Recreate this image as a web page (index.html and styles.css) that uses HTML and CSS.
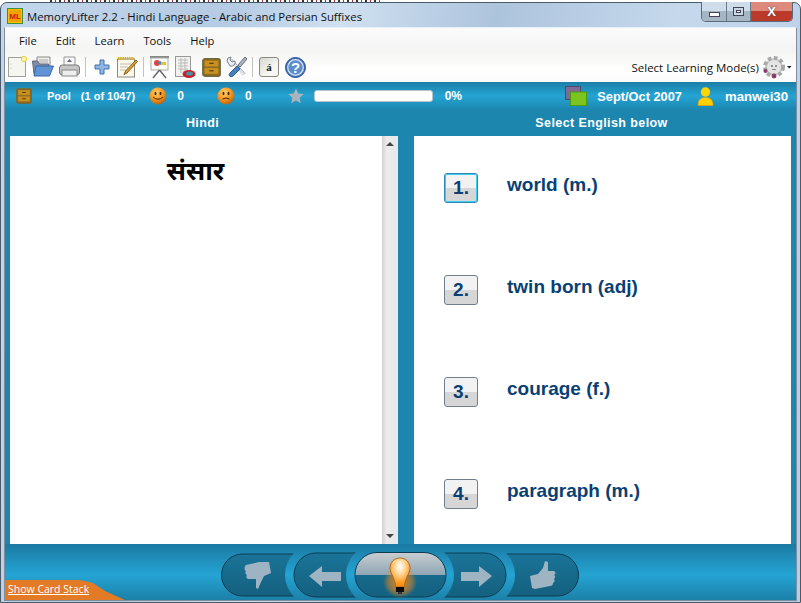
FILE: index.html
```html
<!DOCTYPE html>
<html lang="en">
<head>
<meta charset="utf-8">
<title>MemoryLifter</title>
<link rel="stylesheet" href="styles.css">
</head>
<body>
<svg class="defs" width="0" height="0" aria-hidden="true">
  <defs>
    <symbol id="drawer" viewBox="0 0 18 18">
      <rect x=".7" y=".7" width="16.6" height="16.6" rx="2" fill="#8d6a1e" stroke="#6c6a40" stroke-width="1.2"/>
      <rect x="2.500" y="2.500" width="13" height="5.500" fill="#c8901f"/>
      <rect x="2.500" y="9.500" width="13" height="5.500" fill="#c8901f"/>
      <rect x="7" y="4.500" width="4" height="1.200" fill="#5b3f0d"/>
      <rect x="7" y="11.500" width="4" height="1.200" fill="#5b3f0d"/>
    </symbol>
    <radialGradient id="face" cx=".4" cy=".3" r=".8">
      <stop offset="0" stop-color="#ffd070"/><stop offset=".55" stop-color="#f0921c"/><stop offset="1" stop-color="#a8520c"/>
    </radialGradient>
    <radialGradient id="bulb" cx=".5" cy=".3" r=".7">
      <stop offset="0" stop-color="#fff"/><stop offset=".35" stop-color="#ffd9a0"/><stop offset=".8" stop-color="#ff9a20"/><stop offset="1" stop-color="#f08a10"/>
    </radialGradient>
    <linearGradient id="ringfill" gradientUnits="userSpaceOnUse" x1="0" y1="-8" x2="0" y2="48">
      <stop offset="0" stop-color="#1b7aa2"/><stop offset=".55" stop-color="#25a4d4"/><stop offset="1" stop-color="#1c80a8"/>
    </linearGradient>
    <linearGradient id="pillfill" x1="0" y1="0" x2="0" y2="1">
      <stop offset="0" stop-color="#1a7498"/><stop offset="1" stop-color="#14607f"/>
    </linearGradient>
    <linearGradient id="hintfill" x1="0" y1="0" x2="0" y2="1">
      <stop offset="0" stop-color="#c9ced2"/><stop offset=".5" stop-color="#8ea6b4"/><stop offset=".5" stop-color="#176a8c"/><stop offset="1" stop-color="#14607f"/>
    </linearGradient>
    <radialGradient id="glow">
      <stop offset="0" stop-color="#ff8a10" stop-opacity=".9"/><stop offset=".7" stop-color="#ff8a10" stop-opacity=".45"/><stop offset="1" stop-color="#ff8a10" stop-opacity="0"/>
    </radialGradient>
  </defs>
</svg>
<div class="behind"></div>
<div class="window">
  <header class="titlebar">
    <svg class="app-icon" width="16" height="16" viewBox="0 0 16 16"><rect x=".5" y=".5" width="15" height="15" fill="#f8c400" stroke="#3f8f3a"/><rect x="2" y="2" width="12" height="12" fill="#f4a100"/><text x="8" y="11" text-anchor="middle" class="app-icon-text">ML</text></svg>
    <span class="title">MemoryLifter 2.2 - Hindi Language - Arabic and Persian Suffixes</span>
    <div class="caption">
      <span class="cap cap-min"><i class="min-glyph"></i></span>
      <span class="cap cap-max"><i class="max-glyph"></i></span>
      <span class="cap cap-close">X</span>
    </div>
  </header>
  <div class="client">
    <nav class="menubar">
      <span>File</span><span>Edit</span><span>Learn</span><span>Tools</span><span>Help</span>
    </nav>
    <div class="toolbar">
      <svg class="tool" width="19" height="22" viewBox="0 0 19 22"><rect x=".5" y="1.500" width="17" height="19" fill="#f6f6f0" stroke="#a0a09a"/><circle cx="3" cy="8" r=".6" fill="#bbb"/><circle cx="3" cy="12" r=".6" fill="#bbb"/><circle cx="16" cy="3" r="2.600" fill="#fff6b0" stroke="#e8d040"/></svg>
      <svg class="tool" width="22" height="22" viewBox="0 0 22 22"><path d="M5 1h13v9H5z" fill="#ecece8" stroke="#8a8a8a"/><path d="M7 4h9M7 6h9" stroke="#aaa"/><path d="M0.500 5h5l2 3h9v10H2z" fill="#7d8ea8" stroke="#667"/><path d="M4 10h17.500l-4 10H2z" fill="#5f93d6" stroke="#3a6aa4"/></svg>
      <svg class="tool" width="21" height="22" viewBox="0 0 21 22"><path d="M5 1h11v9H5z" fill="#f6f6f6" stroke="#999"/><path d="M8 6l2.500-3L13 6z" fill="#667"/><rect x=".5" y="9" width="20" height="10" rx="3" fill="#c6c6c6" stroke="#777"/><rect x="3" y="14" width="15" height="6" fill="#eee" stroke="#888"/></svg>
      <i class="sep"></i>
      <svg class="tool ml3" width="16" height="16" viewBox="0 0 16 16"><path d="M6 1h4v5h5v4h-5v5H6v-5H1V6h5z" fill="#8fb6e2" stroke="#3f72ad"/></svg>
      <svg class="tool ml2" width="21" height="22" viewBox="0 0 21 22"><rect x=".5" y="3" width="17" height="18" fill="#fbf8ea" stroke="#8a8a7a"/><path d="M1 2.500h16" stroke="#d8b020" stroke-width="3" stroke-dasharray="1.500 .7"/><path d="M3 8h11M3 11h8M3 14h6" stroke="#bbb"/><path d="M19 4l1.500 1.500L10 17l-3 1.500L8.500 15z" fill="#e0a030" stroke="#6a4a10" stroke-width=".8"/></svg>
      <i class="sep"></i>
      <svg class="tool" width="21" height="24" viewBox="0 0 21 24"><rect x="1" y="1" width="19" height="2" fill="#888"/><rect x="2" y="3" width="17" height="12" fill="#fdfdf8" stroke="#aaa"/><circle cx="8" cy="8" r="3" fill="#d44"/><path d="M8 8l4-2v4z" fill="#48b"/><path d="M12 7h5v3h-5z" fill="#e8c040"/><path d="M10.500 15L4 23M10.500 15L17 23" stroke="#666" stroke-width="1.400"/></svg>
      <svg class="tool" width="21" height="23" viewBox="0 0 21 23"><rect x=".5" y=".5" width="15" height="20" fill="#f2f2ee" stroke="#999"/><path d="M3 4h10M3 7h10M3 10h10M3 13h10M6 2v15M10 2v15" stroke="#bbb"/><ellipse cx="14" cy="18" rx="6.500" ry="4" fill="#c8202a"/><ellipse cx="14.500" cy="17.500" rx="3.500" ry="2" fill="#4a90a8"/></svg>
      <svg class="tool ml1" width="19" height="19"><use href="#drawer"/></svg>
      <svg class="tool" width="21" height="22" viewBox="0 0 21 22"><path d="M4 4l14 15" stroke="#dfe3e8" stroke-width="3"/><path d="M4 4l14 15" stroke="#8a929c" stroke-width=".8" transform="translate(1.500 -1)"/><path d="M1 5a4 4 0 0 1 4-4l-1 3 2 2 3-1a4 4 0 0 1-5 5z" fill="#eef0f2" stroke="#7a8088"/><path d="M19 1l2 2-7 8-2-2z" fill="#aab8c8" stroke="#667"/><path d="M11 10l3 3-7 7c-3 2-5-1-3-3z" fill="#4a80c0" stroke="#2a5a94"/></svg>
      <i class="sep"></i>
      <span class="key ml1"><span class="key-glyph">á</span></span>
      <svg class="tool ml1" width="21" height="21" viewBox="0 0 21 21"><circle cx="10.500" cy="10.500" r="10" fill="#3f6fb8" stroke="#2c4f8c"/><circle cx="10.500" cy="10.500" r="7.800" fill="#5d8ccd" stroke="#d4e3f6" stroke-width="1.300"/><text x="10.500" y="15.500" text-anchor="middle" class="help-text">?</text></svg>
      <div class="mode">
        <span>Select Learning Mode(s)</span>
        <svg width="30" height="24" viewBox="0 0 30 24"><circle cx="12" cy="12" r="9" fill="#c9c9c9" stroke="#a8a8a8" stroke-width="4" stroke-dasharray="3.500 2.500"/><circle cx="12" cy="12" r="7" fill="#e4e4e4"/><circle cx="10" cy="11" r="1" fill="#777"/><circle cx="14" cy="11" r="1" fill="#777"/><path d="M10 14.500h4" stroke="#888"/><circle cx="12" cy="21" r="2.400" fill="#8b3a6b"/><circle cx="3.500" cy="16" r="2" fill="#8b3a6b"/><path d="M25 11h4.500l-2.250 2.500z" fill="#222"/></svg>
      </div>
    </div>
    <main class="learn">
      <div class="status">
        <svg class="status-drawer" width="16" height="16"><use href="#drawer"/></svg>
        <span class="pool">Pool</span>
        <span class="count">(1 of 1047)</span>
        <svg class="smile" width="18" height="18" viewBox="0 0 18 18"><circle cx="9" cy="9" r="8.500" fill="url(#face)"/><ellipse cx="6.500" cy="6.500" rx="1" ry="1.800" fill="#4a2600"/><ellipse cx="11.500" cy="6.500" rx="1" ry="1.800" fill="#4a2600"/><path d="M4 10q5 4.500 10 0" fill="none" stroke="#4a2600"/></svg>
        <b class="num">0</b>
        <svg class="smile s2" width="18" height="18" viewBox="0 0 18 18"><circle cx="9" cy="9" r="8.500" fill="url(#face)"/><ellipse cx="6.500" cy="6.500" rx="1" ry="1.800" fill="#4a2600"/><ellipse cx="11.500" cy="6.500" rx="1" ry="1.800" fill="#4a2600"/><path d="M5.500 12q3.500-2 7 0" fill="none" stroke="#4a2600"/></svg>
        <b class="num">0</b>
        <svg class="star" width="16" height="16" viewBox="0 0 16 16"><path d="M8 .5l2.300 5 5.400.6-4 3.700 1.100 5.400L8 12.500l-4.800 2.700 1.100-5.400-4-3.700 5.400-.6z" fill="#a9b4bd"/></svg>
        <div class="progress"></div>
        <span class="percent">0%</span>
        <svg class="flags" width="22" height="20" viewBox="0 0 22 20"><rect x=".5" y=".5" width="15" height="13" fill="#7d6a96" stroke="#4f4a68"/><rect x="5.500" y="6" width="16" height="13.500" fill="#7cc520" stroke="#4f9a12"/></svg>
        <span class="set">Sept/Oct 2007</span>
        <svg class="user" width="17" height="19" viewBox="0 0 17 19"><circle cx="8.500" cy="5" r="4.700" fill="#ffd400"/><path d="M1 18.500c0-6 3-8 7.500-8s7.500 2 7.500 8z" fill="#ffd000" stroke="#e8a000" stroke-width=".6"/></svg>
        <span class="username">manwei30</span>
      </div>
      <div class="headers">
        <h2>Hindi</h2>
        <h2 class="header-right">Select English below</h2>
      </div>
      <div class="panels">
        <section class="question">
          <div class="question-text">संसार</div>
          <div class="scrollbar"><i class="arrow"></i><i class="arrow down"></i></div>
        </section>
        <section class="answers">
          <div class="answer"><span class="answer-key focused">1.</span><span>world (m.)</span></div>
          <div class="answer"><span class="answer-key">2.</span><span>twin born (adj)</span></div>
          <div class="answer"><span class="answer-key">3.</span><span>courage (f.)</span></div>
          <div class="answer"><span class="answer-key">4.</span><span>paragraph (m.)</span></div>
        </section>
      </div>
      <footer class="controls">
        <a class="stack-link" href="#">Show Card Stack</a>
        <svg class="pill-group" width="358" height="48" viewBox="0 0 358 48">
          <rect class="dark" x=".5" y="2" width="357" height="42" rx="21"/>
          <rect x="64" y="-8" width="230" height="62" rx="31" fill="url(#ringfill)"/>
          <rect class="dark" x="73" y="1" width="212" height="44" rx="22"/>
          <rect x="125" y="-8" width="108" height="62" rx="31" fill="url(#ringfill)"/>
          <rect class="hint" x="134" y=".5" width="91" height="44.500" rx="22"/>
          <path class="glyph" d="M25 13l13-3 10 0 2 11-7 3-3 6-3 7-2-1 0-9-8 0c-2-1-2-3-1-4-2-1-2-3-1-4-2-1-2-4 0-6z"/>
          <path class="glyph" d="M88 24l13-10v6h19v9h-19v6z"/>
          <ellipse cx="179" cy="30" rx="17" ry="16" fill="url(#glow)"/>
          <path d="M179 6c6 0 10 4.500 10 10 0 6-5 9-5.500 19h-9c-.5-10-5.500-13-5.500-19 0-5.500 4-10 10-10z" fill="url(#bulb)" stroke="#a86a1c"/>
          <rect x="175" y="35" width="8" height="5" fill="#0c0c0c"/>
          <rect x="177" y="40" width="4" height="2" fill="#333"/>
          <path class="glyph" d="M271 24l-13-10v6h-18v9h18v6z"/>
          <path class="glyph" d="M309 24l8-2 5-6 2-7 3 1 0 9 6 0c2 1 2 3 0 4 2 1 1 3 0 4 1 1 1 3-1 4 0 2-1 3-3 3l-15 3-3-1z"/>
        </svg>
      </footer>
    </main>
  </div>
</div>
</body>
</html>
```
FILE: styles.css
```css
* { box-sizing: border-box; }
html, body { margin: 0; height: 100%; }
body {
  width: 801px;
  height: 603px;
  overflow: hidden;
  background: #fff;
  font-family: "Liberation Sans", Arial, sans-serif;
}
.defs { position: absolute; }
.behind {
  position: absolute;
  left: 50px;
  top: 0;
  width: 330px;
  height: 2px;
  background: repeating-linear-gradient(90deg, #333 0 2px, #fff 2px 5px, #a33 5px 6px, #fff 6px 9px);
}
.window {
  width: 801px;
  height: 601px;
  margin-top: 2px;
  padding: 0 3px 1px;
  display: flex;
  flex-direction: column;
  border: 1px solid #4a5a68;
  border-radius: 7px 7px 0 0;
  background: linear-gradient(100deg, #c3d7ec 0%, #b5cbe3 25%, #cfe0f0 38%, #adc4dd 55%, #c5d8ec 75%, #b8cee6 100%);
}
.titlebar {
  height: 24px;
  flex: none;
  display: flex;
  align-items: center;
  padding: 2px 0 0 3px;
  position: relative;
}
.app-icon { margin-right: 4px; }
.app-icon-text { font: bold 8px "Liberation Sans", sans-serif; fill: #c8201a; }
.title {
  font: 11.350px "Open Sans", "DejaVu Sans", sans-serif;
  color: #111;
}
.caption {
  position: absolute;
  right: 4px;
  top: -1px;
  display: flex;
  height: 20px;
  border: 1px solid #5a6a7a;
  border-top: 0;
  border-radius: 0 0 5px 5px;
  overflow: hidden;
}
.cap { display: flex; align-items: center; justify-content: center; }
.cap-min, .cap-max {
  background: linear-gradient(#cfdcea 0 50%, #a6b5c4 50% 100%);
  border-right: 1px solid #6a7a8a;
}
.cap-min { width: 25px; }
.cap-max { width: 24px; }
.min-glyph { width: 11px; height: 5px; margin-top: 5px; background: #fff; border: 1px solid #445; }
.max-glyph { width: 11px; height: 9px; background: #fff; border: 1px solid #445; box-shadow: inset 0 0 0 2px #c9d6e4, inset 0 0 0 3px #445; }
.cap-close {
  width: 41px;
  font: bold 13px "Liberation Sans", sans-serif;
  color: #fff;
  text-shadow: 0 0 2px #444;
  background: linear-gradient(#dd8a7c 0 50%, #bb3a2a 50% 100%);
}
.client {
  flex: 1;
  min-height: 0;
  display: flex;
  flex-direction: column;
  border: 1px solid #7f8d9c;
  border-top-color: #e8f0f8;
  background: #fff;
}
.menubar {
  height: 24px;
  flex: none;
  display: flex;
  align-items: center;
  padding-left: 14px;
  gap: 19px;
  font: 11.200px "Open Sans", "DejaVu Sans", sans-serif;
  color: #111;
  background: linear-gradient(#fbfbfb, #f4f4f4);
}
.toolbar {
  height: 30px;
  flex: none;
  display: flex;
  align-items: center;
  padding-left: 3px;
  gap: 5px;
  background: linear-gradient(#f5f5f3, #fff 60%, #fafafa);
}
.tool { flex: none; }
.ml1 { margin-left: 1px; }
.ml2 { margin-left: 2px; }
.ml3 { margin-left: 3px; }
.sep { width: 1px; height: 20px; background: #c3c3c0; flex: none; }
.key {
  width: 20px;
  height: 20px;
  flex: none;
  display: flex;
  align-items: center;
  justify-content: center;
  border: 1px solid #8a8a80;
  border-radius: 3px;
  background: linear-gradient(135deg, #d8d8d0, #f6f6f2 60%);
}
.key-glyph { font: bold 11px "Liberation Serif", serif; color: #222; }
.help-text { font: bold 15px "Liberation Sans", sans-serif; fill: #fff; }
.mode {
  margin-left: auto;
  margin-right: 4px;
  display: flex;
  align-items: center;
  gap: 3px;
  font: 11.500px "Open Sans", "DejaVu Sans", sans-serif;
  color: #111;
}
.learn {
  flex: 1;
  min-height: 0;
  display: flex;
  flex-direction: column;
  background: #1c86ae;
}
.status {
  height: 28px;
  flex: none;
  display: flex;
  align-items: center;
  color: #fff;
  font-size: 11px;
  font-weight: bold;
  background: linear-gradient(#1b7ea6 0%, #25a4d4 50%, #1c86ae 100%);
  padding-left: 11px;
}
.status-drawer { margin-right: 15px; }
.pool { margin-right: 10px; }
.count { margin-right: 14px; }
.smile { flex: none; }
.num { font-size: 12px; margin-left: 10px; }
.s2 { margin-left: 33px; }
.star { margin-left: 36px; flex: none; }
.progress {
  width: 119px;
  height: 12px;
  margin-left: 10px;
  border: 1px solid #b8c4cc;
  border-radius: 3px;
  background: #fff;
}
.percent { font-size: 12px; margin-left: 12px; }
.flags { margin-left: auto; flex: none; }
.set { font-size: 12.800px; margin-left: 10px; }
.user { margin-left: 15px; flex: none; }
.username { font-size: 13.200px; margin: 0 8px 0 11px; }
.headers {
  height: 26px;
  flex: none;
  display: grid;
  grid-template-columns: 395px 1fr;
  align-items: center;
  text-align: center;
  padding-bottom: 1px;
}
.headers h2 {
  margin: 0;
  font-size: 12.500px;
  font-weight: bold;
  color: #fff;
  letter-spacing: .4px;
}
.headers .header-right { padding-left: 7px; }
.panels {
  height: 408px;
  flex: none;
  display: flex;
  padding: 0 5px;
  gap: 16px;
}
.question {
  width: 388px;
  flex: none;
  display: flex;
  background: #fff;
}
.question-text {
  flex: 1;
  text-align: center;
  padding: 16px 1px 0 0;
  font: bold 26px "Noto Sans", "DejaVu Sans", "Liberation Sans", sans-serif;
  color: #000;
}
.scrollbar {
  width: 16px;
  flex: none;
  display: flex;
  flex-direction: column;
  justify-content: space-between;
  align-items: center;
  padding: 6px 0;
  background: linear-gradient(90deg, #d2d2d2, #ececec 30%, #e8e8e8);
}
.arrow {
  width: 0;
  height: 0;
  border: 4px solid transparent;
  border-top: 0;
  border-bottom: 4px solid #444;
}
.arrow.down {
  border: 4px solid transparent;
  border-bottom: 0;
  border-top: 4px solid #444;
}
.answers {
  flex: 1;
  display: flex;
  flex-direction: column;
  padding-top: 37px;
  background: #fff;
}
.answer {
  height: 102px;
  flex: none;
  display: flex;
  align-items: flex-start;
  padding-left: 30px;
  font-size: 19px;
  font-weight: bold;
  color: #0a3f74;
}
.answer-key {
  width: 34px;
  height: 30px;
  margin-right: 29px;
  display: flex;
  align-items: center;
  justify-content: center;
  border: 1px solid #6f7f8c;
  border-radius: 3px;
  font-size: 19px;
  background: linear-gradient(#f2f2f2 0 50%, #d6d6d6 50% 100%);
}
.answer-key + span { line-height: 24px; }
.answer-key.focused {
  border: 1px solid #2f86b8;
  box-shadow: inset 0 0 0 1px #38d0f0;
}
.controls {
  flex: 1;
  min-height: 0;
  position: relative;
  display: flex;
  justify-content: center;
  overflow: hidden;
  background: linear-gradient(#1b7aa2 0%, #25a4d4 55%, #1c80a8 100%);
}
.stack-link {
  position: absolute;
  left: 0;
  bottom: 0;
  width: 120px;
  height: 20px;
  padding: 2px 0 0 3px;
  font: 10.500px "Open Sans", "DejaVu Sans", sans-serif;
  color: #fff;
  background: #e27a26;
  clip-path: polygon(0 0, 75px 0, 88px 3px, 100px 11px, 120px 20px, 0 20px);
}
.pill-group {
  flex: none;
  margin: 8px 1px 0 0;
}
.dark { fill: url(#pillfill); stroke: #0d3c52; }
.hint { fill: url(#hintfill); stroke: #0d3c52; }
.glyph { fill: #9fb4c3; }
```
